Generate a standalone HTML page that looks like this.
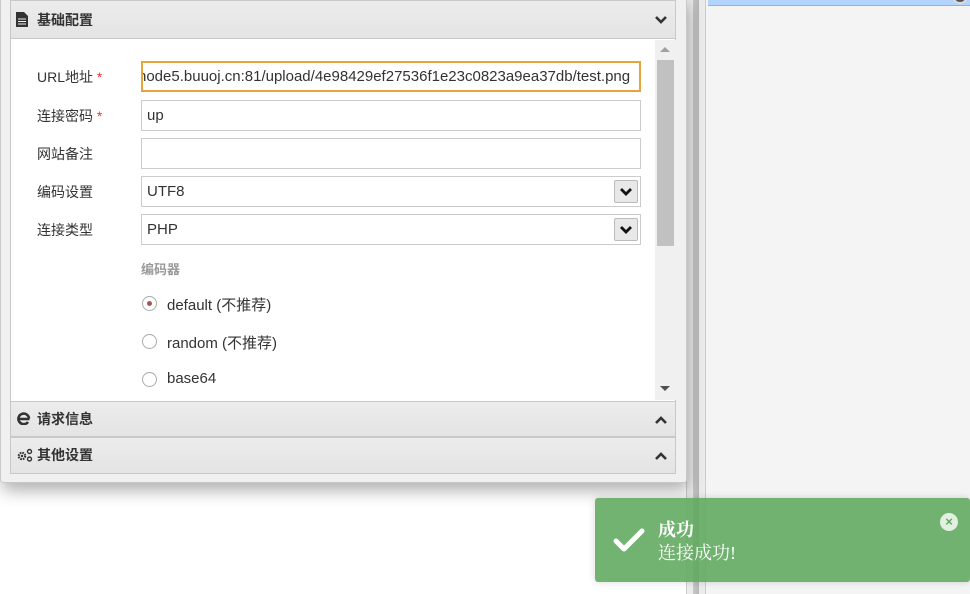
<!DOCTYPE html>
<html><head><meta charset="utf-8"><style>
*{margin:0;padding:0;box-sizing:border-box}
body{width:970px;height:594px;overflow:hidden;background:#fff;font-family:"Liberation Sans","Noto Sans CJK SC",sans-serif;position:relative;font-size:15px;color:#333}
.abs{position:absolute}
.hdr{position:absolute;left:10px;width:666px;background:linear-gradient(#ececec,#e4e4e4);border:1px solid #c8c8c8;font-weight:bold;font-size:14px;color:#333;padding-left:26px}
.lbl{position:absolute;left:37px;font-size:14px;color:#333}
.star{color:#e33}
.inp{position:absolute;left:141px;width:500px;height:31px;border:1px solid #ccc;background:#fff;font-size:15px;padding-left:5px;line-height:29px;color:#333;white-space:nowrap;overflow:hidden}
.sel .btn{position:absolute;right:2px;top:3px;width:24px;height:23px;border:1px solid #bbb;border-radius:2px;background:#e8e8e8}
.radio{position:absolute;left:142px;width:15px;height:15px;border:1px solid #aaa;border-radius:50%;background:#fff}
.rl{position:absolute;left:167px;font-size:15px;color:#333}
</style></head><body>
<div class="abs" style="left:686px;top:0;width:284px;height:594px;background:#f4f4f4"></div>
<div class="abs" style="left:686px;top:0;width:20px;height:594px;background:#ececec;border-left:1px solid #ccc;border-right:1px solid #ccc"></div>
<div class="abs" style="left:693px;top:0;width:6px;height:594px;background:linear-gradient(90deg,#c8c8c8,#b8b8b8)"></div>
<div class="abs" style="left:708px;top:0;width:262px;height:6px;background:#b3d4fc;border-bottom:1px solid #aac"></div>
<div class="abs" style="left:952px;top:-12px;width:16px;height:16px;border-radius:50%;background:#555;border:2px solid #ddd"></div>
<div class="abs" style="left:0;top:-4px;width:687px;height:487px;background:#f0f0f0;border:1px solid #c8c8c8;border-radius:0 0 3px 3px;box-shadow:2px 8px 16px rgba(0,0,0,.3)"></div>
<div class="abs" style="left:10px;top:38px;width:666px;height:364px;background:#fff;border-left:1px solid #c8c8c8;border-right:1px solid #c8c8c8"></div>
<div class="hdr" style="top:0;height:39px;line-height:38px">基础配置</div>
<svg class="abs" style="left:16px;top:12px" width="12" height="15" viewBox="0 0 12 15"><path d="M0 0h8l4 4v11H0z" fill="#333"/><path d="M2 7h8M2 9.5h8M2 12h8" stroke="#eee" stroke-width="1"/></svg>
<svg class="abs" style="left:654px;top:15px" width="14" height="10" viewBox="0 0 14 10"><path d="M2 2l5 5 5-5" stroke="#333" stroke-width="2.6" fill="none"/></svg>
<div class="abs" style="left:655px;top:40px;width:21px;height:360px;background:#f0f0f0"></div>
<div class="abs" style="left:657px;top:60px;width:17px;height:186px;background:#c1c1c1"></div>
<div class="abs" style="left:660px;top:47px;border:5px solid transparent;border-bottom:5px solid #a0a0a0;border-top:0"></div>
<div class="abs" style="left:660px;top:386px;border:5px solid transparent;border-top:5px solid #505050;border-bottom:0"></div>
<div class="lbl" style="top:67px">URL地址 <span class="star">*</span></div>
<div class="inp" style="top:61px;border:2px solid #e8a33d;line-height:27px;padding-left:0"><span style="margin-left:-5px">node5.buuoj.cn:81/upload/4e98429ef27536f1e23c0823a9ea37db/test.png</span></div>
<div class="lbl" style="top:106px">连接密码 <span class="star">*</span></div>
<div class="inp" style="top:100px">up</div>
<div class="lbl" style="top:144px">网站备注</div>
<div class="inp" style="top:138px"></div>
<div class="lbl" style="top:182px">编码设置</div>
<div class="inp sel" style="top:176px">UTF8<div class="btn"><svg width="22" height="21" viewBox="0 0 22 21"><path d="M6 8l5 5 5-5" stroke="#111" stroke-width="2.8" fill="none"/></svg></div></div>
<div class="lbl" style="top:220px">连接类型</div>
<div class="inp sel" style="top:214px">PHP<div class="btn"><svg width="22" height="21" viewBox="0 0 22 21"><path d="M6 8l5 5 5-5" stroke="#111" stroke-width="2.8" fill="none"/></svg></div></div>
<div class="abs" style="left:141px;top:259px;font-size:13px;color:#999;font-weight:bold">编码器</div>
<div class="radio" style="top:296px"><div style="position:absolute;left:4px;top:4px;width:5px;height:5px;border-radius:50%;background:#a55"></div></div>
<div class="rl" style="top:294px">default (不推荐)</div>
<div class="radio" style="top:334px"></div>
<div class="rl" style="top:332px">random (不推荐)</div>
<div class="radio" style="top:372px"></div>
<div class="rl" style="top:370px">base64</div>
<div class="hdr" style="top:401px;height:36px;line-height:34px">请求信息</div>
<svg class="abs" style="left:17px;top:412px" width="14" height="13" viewBox="0 0 14 13"><path d="M12.5 7H2.2M12 6.5A5.3 5.3 0 1 0 11 10" stroke="#333" stroke-width="2.6" fill="none"/></svg>
<svg class="abs" style="left:654px;top:415px" width="14" height="10" viewBox="0 0 14 10"><path d="M2 8l5-5 5 5" stroke="#333" stroke-width="2.6" fill="none"/></svg>
<div class="hdr" style="top:437px;height:37px;line-height:35px">其他设置</div>
<svg class="abs" style="left:17px;top:448px" width="16" height="14" viewBox="0 0 16 14"><circle cx="5" cy="8" r="3.2" fill="none" stroke="#333" stroke-width="2.2" stroke-dasharray="1.6 0.9"/><circle cx="5" cy="8" r="1.2" fill="#333"/><circle cx="12.5" cy="3.5" r="2" fill="none" stroke="#333" stroke-width="1.4"/><circle cx="12.5" cy="11" r="2" fill="none" stroke="#333" stroke-width="1.4"/></svg>
<svg class="abs" style="left:654px;top:451px" width="14" height="10" viewBox="0 0 14 10"><path d="M2 8l5-5 5 5" stroke="#333" stroke-width="2.6" fill="none"/></svg>
<div class="abs" style="left:595px;top:498px;width:375px;height:84px;background:rgba(94,168,94,.88);border-radius:3px;box-shadow:0 0 8px rgba(0,0,0,.15)"></div>
<svg class="abs" style="left:612px;top:526px" width="34" height="28" viewBox="0 0 34 28"><path d="M4 15l8 8L30 5" stroke="#fff" stroke-width="5" fill="none" stroke-linecap="round" stroke-linejoin="round"/></svg>
<div class="abs" style="left:658px;top:516px;color:#fff;font-weight:bold;font-size:18px;font-family:'Liberation Serif','Noto Serif CJK SC',serif">成功</div>
<div class="abs" style="left:658px;top:539px;color:#fff;font-size:18px;font-family:'Liberation Serif','Noto Serif CJK SC',serif">连接成功!</div>
<div class="abs" style="left:940px;top:513px;width:18px;height:18px;border-radius:50%;background:rgba(255,255,255,.8);color:#5ea85e;font-size:13px;font-weight:bold;text-align:center;line-height:18px">×</div>
</body></html>
